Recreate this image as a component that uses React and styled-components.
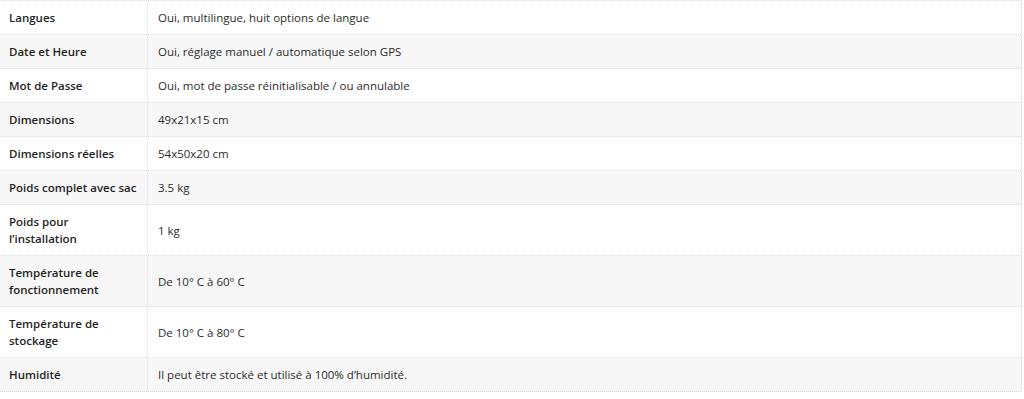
import styled, { createGlobalStyle } from "styled-components";

const GlobalStyle = createGlobalStyle`
  body {
    margin: 0;
    background: #fff;
    font-family: "Open Sans", "Lato", sans-serif;
  }
`;

const Table = styled.table`
  width: 1022px;
  border-collapse: collapse;
  border-top: 1px dotted #dcdcdc;
  border-right: 1px solid #e6e6e6;
  font-size: 11.5px;
  line-height: 17px;
  color: #2b2b2b;
`;

const Row = styled.tr`
  background: ${(p) => (p.$shaded ? "#f7f7f7" : "#fff")};
  border-bottom: 1px dotted #dcdcdc;
`;

const Label = styled.th`
  width: 128px;
  padding: 8px 10px 8px 9px;
  text-align: left;
  font-weight: 600;
  color: #1f1f1f;
  vertical-align: middle;
  border-right: 1px solid #ececec;
`;

const Value = styled.td`
  padding: 8px 10px;
  vertical-align: middle;
`;

const specs = [
  ["Langues", "Oui, multilingue, huit options de langue"],
  ["Date et Heure", "Oui, réglage manuel / automatique selon GPS"],
  ["Mot de Passe", "Oui, mot de passe réinitialisable / ou annulable"],
  ["Dimensions", "49x21x15 cm"],
  ["Dimensions réelles", "54x50x20 cm"],
  ["Poids complet avec sac", "3.5 kg"],
  ["Poids pour l’installation", "1 kg"],
  ["Température de fonctionnement", "De 10° C à 60° C"],
  ["Température de stockage", "De 10° C à 80° C"],
  ["Humidité", "Il peut être stocké et utilisé à 100% d’humidité."],
];

const App = () => {
  return (
    <>
      <GlobalStyle />
      <Table>
        <tbody>
          {specs.map(([label, value], i) => (
            <Row key={label} $shaded={i % 2 === 1}>
              <Label>{label}</Label>
              <Value>{value}</Value>
            </Row>
          ))}
        </tbody>
      </Table>
    </>
  );
};

export default App;
